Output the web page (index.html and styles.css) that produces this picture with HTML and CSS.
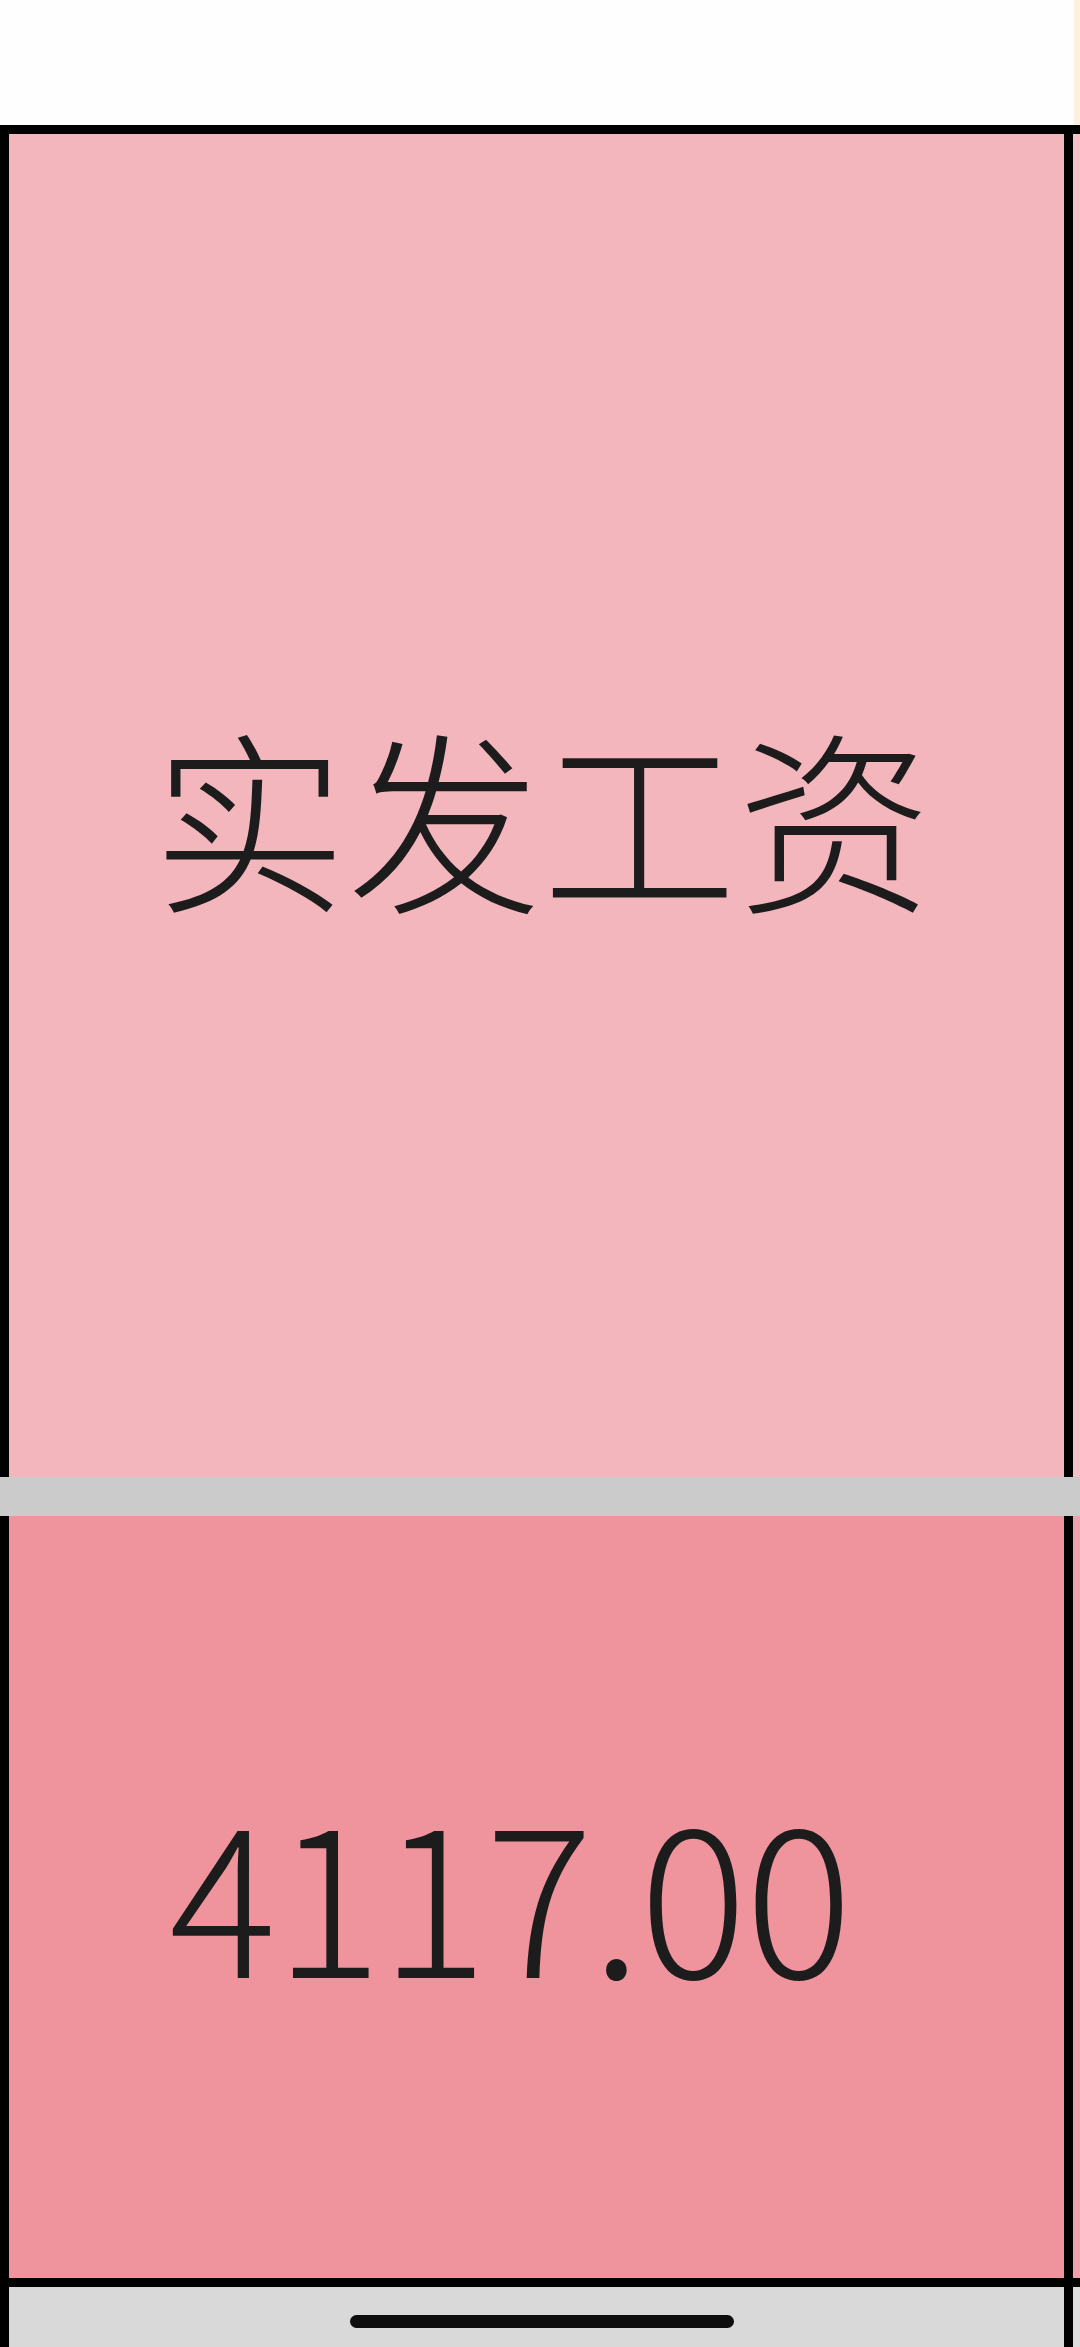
FILE: index.html
```html
<!DOCTYPE html>
<html lang="zh-CN">
<head>
<meta charset="utf-8">
<title>实发工资</title>
<link rel="stylesheet" href="styles.css">
</head>
<body>
<div class="screen">
  <header class="header">
    <div class="header-space"></div>
    <div class="header-edge"></div>
  </header>
  <section class="sheet">
    <div class="row row-label">
      <div class="cell cell-label"><span class="label-text">实发工资</span></div>
      <div class="edge edge-label"></div>
    </div>
    <div class="divider"></div>
    <div class="row row-value">
      <div class="cell cell-value"><span class="value-text">4117.00</span></div>
      <div class="edge edge-value"></div>
    </div>
  </section>
  <footer class="footer">
    <div class="footer-inner">
      <div class="home-bar"></div>
    </div>
    <div class="edge edge-footer"></div>
  </footer>
</div>
</body>
</html>
```

FILE: styles.css
```css
html, body {
  margin: 0;
  padding: 0;
  background: #fefefe;
}

.screen {
  width: 1080px;
  height: 2347px;
  display: flex;
  flex-direction: column;
  overflow: hidden;
  font-family: "Noto Sans CJK SC", "Noto Sans", sans-serif;
  color: #1c1c1c;
}

.header {
  height: 125px;
  display: flex;
  flex: none;
}

.header-space {
  flex: 1;
  background: #fefefe;
}

.header-edge {
  width: 6px;
  background: #fdf0e0;
}

.sheet {
  flex: none;
  border-top: 9px solid #000;
  border-bottom: 9px solid #000;
  display: flex;
  flex-direction: column;
}

.row {
  display: flex;
}

.cell {
  flex: 1;
  border-left: 9px solid #000;
  border-right: 9px solid #000;
  display: flex;
  align-items: center;
  box-sizing: border-box;
}

.edge {
  width: 7px;
  flex: none;
}

.row-label {
  height: 1343px;
}

.cell-label {
  background: #f4b6bd;
  padding-top: 18px;
  padding-left: 143px;
}

.edge-label {
  background: #f4c2c6;
}

.label-text {
  font-size: 195px;
  line-height: 1;
  font-weight: 300;
  white-space: nowrap;
}

.divider {
  height: 39px;
  background: #cbcbcb;
}

.row-value {
  height: 762px;
}

.cell-value {
  background: #ef939d;
  padding-bottom: 14px;
  padding-left: 160px;
}

.edge-value {
  background: #f0a2aa;
}

.value-text {
  font-size: 201px;
  line-height: 1;
  font-weight: 300;
  letter-spacing: -2px;
  white-space: nowrap;
}

.footer {
  flex: 1;
  display: flex;
  background: #d9d9d9;
}

.footer-inner {
  flex: 1;
  border-left: 9px solid #000;
  border-right: 9px solid #000;
  display: flex;
  justify-content: center;
  padding-top: 28px;
  box-sizing: border-box;
}

.edge-footer {
  background: #dcdcdc;
}

.home-bar {
  width: 384px;
  height: 13px;
  border-radius: 7px;
  background: #0d0d0d;
  margin-left: 11px;
}
```
